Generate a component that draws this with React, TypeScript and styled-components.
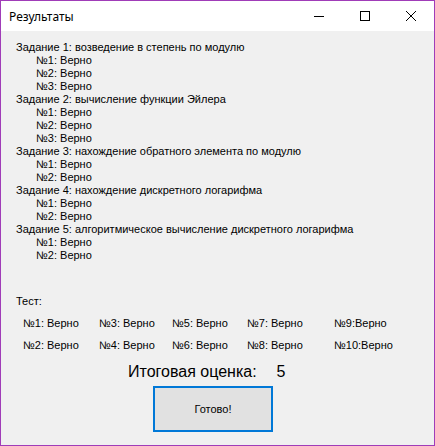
import * as React from 'react';
import styled, { createGlobalStyle } from 'styled-components';

const Global = createGlobalStyle`
  html, body { margin: 0; padding: 0; background: #f0f0f0; }
  * { box-sizing: border-box; }
`;

const Window = styled.div`
  width: 435px;
  height: 446px;
  border: 1px solid #a03cb8;
  display: flex;
  flex-direction: column;
  background: #f0f0f0;
  font-family: 'Liberation Sans', Arial, sans-serif;
  color: #000;
`;

const TitleBar = styled.div`
  height: 30px;
  flex: none;
  background: #fff;
  display: flex;
  align-items: center;
`;

const Title = styled.span`
  flex: 1;
  padding-left: 8px;
  font-family: 'Noto Sans', 'Open Sans', sans-serif;
  font-size: 12px;
  color: #000;
`;

const CaptionButton = styled.div`
  width: 46px;
  height: 30px;
  display: flex;
  align-items: center;
  justify-content: center;
`;

const Content = styled.div`
  flex: 1;
  display: flex;
  flex-direction: column;
  padding: 10px 0 0 15px;
  font-size: 11px;
`;

const TaskList = styled.div`
  display: flex;
  flex-direction: column;
`;

const Line = styled.div<{ $indent?: boolean }>`
  height: 13px;
  line-height: 13px;
  white-space: nowrap;
  padding-left: ${(p) => (p.$indent ? '20px' : '0')};
`;

const TestLabel = styled.div`
  margin-top: 33px;
  height: 13px;
  line-height: 13px;
`;

const TestGrid = styled.div`
  margin-top: 9px;
  margin-left: 7px;
  display: grid;
  grid-template-columns: 76px 73px 75px 87px 1fr;
  grid-auto-flow: column;
  grid-template-rows: 22px 22px;
  line-height: 13px;
`;

const TestCell = styled.div`
  white-space: nowrap;
`;

const Score = styled.div`
  margin-top: 1px;
  display: flex;
  padding-left: 112px;
  font-size: 16px;
  height: 20px;
  line-height: 20px;
`;

const ScoreValue = styled.span`
  margin-left: 20px;
`;

const Done = styled.button`
  margin: 4px 0 0 137px;
  width: 120px;
  height: 46px;
  border: 2px solid #0078d7;
  background: #e1e1e1;
  font-family: 'Liberation Sans', Arial, sans-serif;
  font-size: 11px;
  color: #000;
  padding: 0;
`;

const tasks: { title: string; count: number }[] = [
  { title: 'Задание 1: возведение в степень по модулю', count: 3 },
  { title: 'Задание 2: вычисление функции Эйлера', count: 3 },
  { title: 'Задание 3: нахождение обратного элемента по модулю', count: 2 },
  { title: 'Задание 4: нахождение дискретного логарифма', count: 2 },
  { title: 'Задание 5: алгоритмическое вычисление дискретного логарифма', count: 2 },
];

const tests = [
  '№1: Верно',
  '№2: Верно',
  '№3: Верно',
  '№4: Верно',
  '№5: Верно',
  '№6: Верно',
  '№7: Верно',
  '№8: Верно',
  '№9:Верно',
  '№10:Верно',
];

export default function App() {
  return (
    <>
      <Global />
      <Window>
        <TitleBar>
          <Title>Результаты</Title>
          <CaptionButton>
            <svg width="10" height="10" viewBox="0 0 10 10">
              <path d="M0 5.5h10" stroke="#000" strokeWidth="1" />
            </svg>
          </CaptionButton>
          <CaptionButton>
            <svg width="10" height="10" viewBox="0 0 10 10">
              <rect x="0.5" y="0.5" width="9" height="9" fill="none" stroke="#000" strokeWidth="1" />
            </svg>
          </CaptionButton>
          <CaptionButton>
            <svg width="10" height="10" viewBox="0 0 10 10">
              <path d="M0 0L10 10M10 0L0 10" stroke="#000" strokeWidth="1" />
            </svg>
          </CaptionButton>
        </TitleBar>
        <Content>
          <TaskList>
            {tasks.map((t) => (
              <React.Fragment key={t.title}>
                <Line>{t.title}</Line>
                {Array.from({ length: t.count }, (_, i) => (
                  <Line $indent key={i}>
                    №{i + 1}: Верно
                  </Line>
                ))}
              </React.Fragment>
            ))}
          </TaskList>
          <TestLabel>Тест:</TestLabel>
          <TestGrid>
            {tests.map((t) => (
              <TestCell key={t}>{t}</TestCell>
            ))}
          </TestGrid>
          <Score>
            <span>Итоговая оценка:</span>
            <ScoreValue>5</ScoreValue>
          </Score>
          <Done>Готово!</Done>
        </Content>
      </Window>
    </>
  );
}
